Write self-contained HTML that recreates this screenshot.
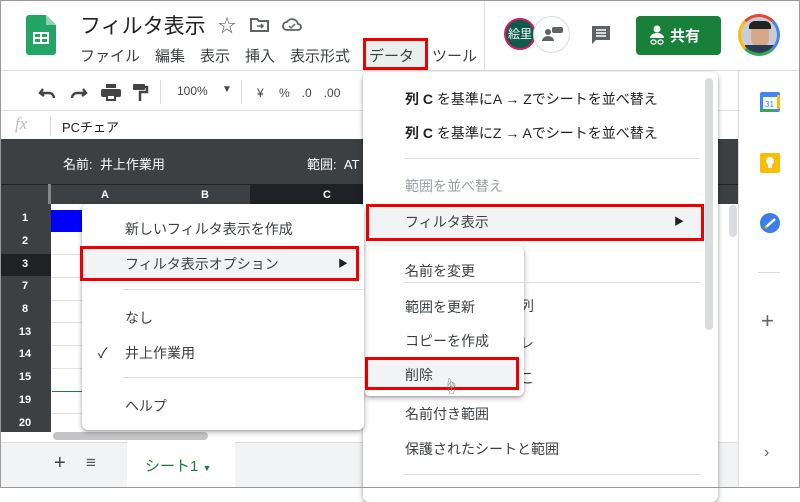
<!DOCTYPE html>
<html><head><meta charset="utf-8"><style>
*{margin:0;padding:0;box-sizing:border-box}
body{width:800px;height:488px;overflow:hidden;background:#fff;font-family:"Liberation Sans","Noto Sans CJK JP",sans-serif;color:#3c4043;position:relative}
.a{position:absolute}
.t{position:absolute;white-space:nowrap;font-size:14px;color:#3c4043}
.menu{position:absolute;background:#fff;border-radius:6px;box-shadow:0 2px 6px rgba(0,0,0,.3),0 1px 2px rgba(0,0,0,.15)}
.red{position:absolute;border:3px solid #e00;background:#f1f3f4}
.sep{position:absolute;height:1px;background:#dadce0}
.rn{position:absolute;left:0;width:50px;text-align:center;color:#fff;font-size:11px;font-weight:bold}
.hl{position:absolute;left:52px;width:310px;height:1px;background:#e2e2e2}
</style></head><body>
<div class="a" style="left:0;top:0;width:800px;height:488px;border:1px solid #999;z-index:50;pointer-events:none"></div>
<svg class="a" style="left:26px;top:15px" width="30" height="40" viewBox="0 0 30 40"><path d="M3 0h17l10 10v27a3 3 0 0 1-3 3H3a3 3 0 0 1-3-3V3a3 3 0 0 1 3-3z" fill="#23a566"/><path d="M20 0v10h10z" fill="#8ed1b1"/><rect x="7" y="17" width="16" height="12" fill="#fff"/><rect x="9" y="19" width="5" height="3" fill="#23a566"/><rect x="16" y="19" width="5" height="3" fill="#23a566"/><rect x="9" y="24" width="5" height="3" fill="#23a566"/><rect x="16" y="24" width="5" height="3" fill="#23a566"/></svg>
<div class="t" style="left:80px;top:10px;font-size:21px;color:#202124">フィルタ表示</div>
<div class="t" style="left:218px;top:12px;font-size:18px;color:#5f6368">☆</div>
<svg class="a" style="left:250px;top:17px" width="20" height="16"><path d="M1 2h6l2 2h9v10H1z" fill="none" stroke="#5f6368" stroke-width="2"/><path d="M7 9h6M11 7l2 2-2 2" stroke="#5f6368" stroke-width="1.6" fill="none"/></svg>
<svg class="a" style="left:282px;top:16px" width="20" height="16"><path d="M5 14a4 4 0 0 1 0-8 6 6 0 0 1 11 2 3 3 0 0 1 0 6z" fill="none" stroke="#5f6368" stroke-width="1.8"/><path d="M7 10l2 2 4-4" stroke="#5f6368" stroke-width="1.5" fill="none"/></svg>
<div class="t" style="left:80px;top:45px;font-size:15px">ファイル　編集　表示　挿入　表示形式</div>
<div class="a" style="left:363px;top:38px;width:65px;height:32px;border:3px solid #e00;background:#e8f0ee"></div>
<div class="t" style="left:369px;top:45px;font-size:15px">データ</div>
<div class="t" style="left:432px;top:45px;font-size:15px">ツール</div>
<div class="a" style="left:484px;top:0;width:1px;height:70px;background:#e0e0e0"></div>
<div class="a" style="left:504px;top:18px;width:32px;height:32px;border-radius:50%;background:#0d5b4b;border:2px solid #d81b60;color:#fff;font-size:12px;line-height:28px;text-align:center;overflow:hidden">絵里</div>
<div class="a" style="left:533px;top:16px;width:37px;height:37px;border-radius:50%;background:#fff;border:1.5px solid #dadce0"></div>
<svg class="a" style="left:542px;top:25px" width="22" height="18"><circle cx="6" cy="7" r="3" fill="#5f6368"/><path d="M0 16a6 5 0 0 1 12 0z" fill="#5f6368"/><rect x="10" y="2" width="11" height="6" rx="2" fill="#5f6368"/></svg>
<svg class="a" style="left:590px;top:24px" width="22" height="22"><path d="M2 2h18v14H6l-4 4z" fill="#5f6368"/><path d="M6 6h10M6 9h10M6 12h10" stroke="#fff" stroke-width="1.5"/></svg>
<div class="a" style="left:636px;top:16px;width:85px;height:39px;background:#188038;border-radius:4px"></div>
<svg class="a" style="left:648px;top:24px" width="18" height="22"><circle cx="9" cy="5" r="3.5" fill="#fff"/><path d="M2 14a7 5 0 0 1 14 0z" fill="#fff"/><rect x="3" y="16" width="5" height="4" rx="2" fill="none" stroke="#fff" stroke-width="1.3"/><rect x="10" y="16" width="5" height="4" rx="2" fill="none" stroke="#fff" stroke-width="1.3"/></svg>
<div class="t" style="left:670px;top:25px;font-size:15px;color:#fff;font-weight:bold">共有</div>
<div class="a" style="left:738px;top:14px;width:42px;height:42px;border-radius:50%;border:3px solid;border-color:#ea4335 #4285f4 #34a853 #fbbc04;background:#c9cdd3;overflow:hidden"><div class="a" style="left:10px;top:6px;width:18px;height:24px;border-radius:8px;background:#d6a88a"></div><div class="a" style="left:8px;top:4px;width:22px;height:8px;background:#222;border-radius:6px 6px 0 0"></div><div class="a" style="left:4px;top:28px;width:30px;height:12px;background:#2b3a55"></div></div>
<div class="a" style="left:0;top:70px;width:800px;height:1px;background:#dadce0"></div>
<svg class="a" style="left:38px;top:85px" width="50" height="16"><path d="M5 4L2 8l4 3M2 8h9a5 5 0 0 1 5 5" stroke="#444" stroke-width="2.4" fill="none"/><path d="M45 4l3 4-4 3M48 8h-9a5 5 0 0 0-5 5" stroke="#444" stroke-width="2.4" fill="none"/></svg>
<svg class="a" style="left:101px;top:84px" width="20" height="17"><rect x="5" y="0" width="10" height="4" fill="#444"/><rect x="0" y="5" width="20" height="8" rx="2" fill="#444"/><rect x="5" y="11" width="10" height="6" fill="#444"/><rect x="7" y="12" width="6" height="3" fill="#fff"/></svg>
<svg class="a" style="left:133px;top:84px" width="16" height="18"><rect x="0" y="0" width="12" height="6" rx="1" fill="#444"/><path d="M12 3h2v5H7v9" stroke="#444" stroke-width="2.5" fill="none"/></svg>
<div class="a" style="left:160px;top:80px;width:1px;height:24px;background:#dadce0"></div>
<div class="t" style="left:177px;top:84px;font-size:12px;color:#444">100%</div>
<div class="t" style="left:222px;top:84px;font-size:10px;color:#444">▼</div>
<div class="a" style="left:241px;top:80px;width:1px;height:24px;background:#dadce0"></div>
<div class="t" style="left:257px;top:84px;font-size:12px;color:#444">¥　 %　.0　.00</div>
<div class="a" style="left:0;top:110px;width:740px;height:1px;background:#e0e0e0"></div>
<div class="t" style="left:15px;top:114px;font-size:17px;color:#bbb;font-style:italic;font-family:'Liberation Serif',serif">fx</div>
<div class="a" style="left:50px;top:116px;width:1px;height:20px;background:#dadce0"></div>
<div class="t" style="left:62px;top:117px;font-size:13px;color:#202124">PCチェア</div>
<div class="a" style="left:0;top:139px;width:738px;height:45px;background:#3c4043"></div>
<div class="t" style="left:63px;top:154px;font-size:13px;color:#fff">名前:&nbsp; 井上作業用</div>
<div class="t" style="left:307px;top:154px;font-size:13px;color:#fff">範囲:&nbsp; AT</div>
<div class="a" style="left:0;top:184px;width:738px;height:20px;background:#3c4043;border-top:1px solid #222"></div>
<div class="a" style="left:48px;top:184px;width:3px;height:20px;background:#888"></div>
<div class="a" style="left:250px;top:184px;width:120px;height:20px;background:#202124"></div>
<div class="t" style="left:101px;top:189px;font-size:11px;color:#fff;font-weight:bold">A</div>
<div class="t" style="left:201px;top:189px;font-size:11px;color:#fff;font-weight:bold">B</div>
<div class="t" style="left:323px;top:189px;font-size:11px;color:#fff;font-weight:bold">C</div>
<div class="a" style="left:0;top:204px;width:51px;height:228px;background:#3c4043"></div>
<div class="a" style="left:0;top:254px;width:51px;height:22px;background:#202124"></div>
<div class="a" style="left:51px;top:210px;width:35px;height:22px;background:#0000ff"></div>
<div class="rn" style="top:212px">1</div><div class="rn" style="top:235px">2</div><div class="rn" style="top:258px">3</div><div class="rn" style="top:280px">7</div><div class="rn" style="top:303px">8</div><div class="rn" style="top:326px">13</div><div class="rn" style="top:348px">14</div><div class="rn" style="top:371px">15</div><div class="rn" style="top:394px">19</div><div class="rn" style="top:417px">20</div>
<div class="hl" style="top:254px"></div><div class="hl" style="top:277px"></div><div class="hl" style="top:300px"></div><div class="hl" style="top:322px"></div><div class="hl" style="top:345px"></div><div class="hl" style="top:368px"></div><div class="a" style="left:52px;top:391px;width:310px;height:1px;background:#188038"></div><div class="hl" style="top:413px"></div>
<div class="a" style="left:53px;top:432px;width:155px;height:8px;border-radius:4px;background:#c5c5c5"></div>
<div class="a" style="left:0;top:442px;width:738px;height:46px;background:#f1f3f4;border-top:1px solid #dadce0"></div>
<div class="t" style="left:54px;top:452px;font-size:20px;color:#444">+</div>
<div class="t" style="left:86px;top:453px;font-size:17px;color:#555">≡</div>
<div class="a" style="left:127px;top:442px;width:108px;height:46px;background:#fff"></div>
<div class="t" style="left:145px;top:455px;font-size:15px;color:#188038">シート1 <span style="font-size:9px">▼</span></div>
<div class="a" style="left:738px;top:71px;width:1px;height:417px;background:#dadce0"></div>
<svg class="a" style="left:759px;top:91px" width="22" height="22"><rect x="1" y="1" width="20" height="20" rx="2" fill="#4285f4"/><rect x="4" y="6" width="14" height="12" fill="#fff"/><rect x="1" y="18" width="14" height="3" fill="#34a853"/><rect x="18" y="4" width="3" height="14" fill="#fbbc04"/><text x="6" y="16" font-size="8" fill="#4285f4" font-family="Liberation Sans">31</text></svg>
<svg class="a" style="left:759px;top:152px" width="22" height="22"><rect x="1" y="1" width="20" height="20" rx="2" fill="#fbbc04"/><circle cx="11" cy="9" r="4" fill="#fff"/><rect x="9" y="13" width="4" height="3" fill="#fff"/></svg>
<svg class="a" style="left:759px;top:212px" width="22" height="22"><circle cx="11" cy="11" r="10" fill="#3b7de9"/><path d="M7 15l9-8" stroke="#fff" stroke-width="2.5"/><circle cx="7" cy="15" r="1.5" fill="#fbbc04"/></svg>
<div class="a" style="left:758px;top:272px;width:22px;height:1px;background:#dadce0"></div>
<div class="t" style="left:761px;top:308px;font-size:22px;color:#5f6368">+</div>
<div class="t" style="left:764px;top:444px;font-size:16px;color:#5f6368">›</div>
<div class="menu" style="left:363px;top:72px;width:355px;height:430px"></div>
<div class="a" style="left:705px;top:78px;width:8px;height:252px;border-radius:4px;background:#dadce0"></div>
<div class="a" style="left:729px;top:205px;width:8px;height:32px;border-radius:4px;background:#dadce0"></div>
<div class="t" style="left:405px;top:89px;color:#202124"><b>列 C</b> を基準にA → Zでシートを並べ替え</div>
<div class="t" style="left:405px;top:123px;color:#202124"><b>列 C</b> を基準にZ → Aでシートを並べ替え</div>
<div class="sep" style="left:404px;top:158px;width:296px"></div>
<div class="t" style="left:405px;top:176px;color:#9aa0a6">範囲を並べ替え</div>
<div class="red" style="left:366px;top:204px;width:338px;height:37px"></div>
<div class="t" style="left:405px;top:212px">フィルタ表示</div>
<div class="t" style="left:674px;top:213px;font-size:10px;color:#202124">▶</div>
<div class="t" style="left:520px;top:296px">列</div>
<div class="t" style="left:520px;top:333px">レ</div>
<div class="t" style="left:520px;top:368px">こ</div>
<div class="t" style="left:405px;top:404px">名前付き範囲</div>
<div class="t" style="left:405px;top:439px">保護されたシートと範囲</div>
<div class="sep" style="left:404px;top:474px;width:296px"></div>
<div class="menu" style="left:364px;top:246px;width:160px;height:150px"></div>
<div class="t" style="left:405px;top:261px">名前を変更</div>
<div class="sep" style="left:404px;top:282px;width:296px"></div>
<div class="t" style="left:405px;top:297px">範囲を更新</div>
<div class="t" style="left:405px;top:331px">コピーを作成</div>
<div class="red" style="left:365px;top:357px;width:154px;height:33px"></div>
<div class="t" style="left:405px;top:365px">削除</div>
<div class="t" style="left:443px;top:373px;font-size:16px;color:#777">☝</div>
<div class="menu" style="left:82px;top:204px;width:282px;height:226px"></div>
<div class="t" style="left:125px;top:219px">新しいフィルタ表示を作成</div>
<div class="red" style="left:80px;top:246px;width:279px;height:35px"></div>
<div class="t" style="left:125px;top:254px">フィルタ表示オプション</div>
<div class="t" style="left:338px;top:255px;font-size:10px;color:#202124">▶</div>
<div class="sep" style="left:123px;top:289px;width:240px"></div>
<div class="t" style="left:125px;top:308px">なし</div>
<div class="t" style="left:98px;top:343px;color:#202124">✓</div>
<div class="t" style="left:125px;top:343px">井上作業用</div>
<div class="sep" style="left:123px;top:377px;width:240px"></div>
<div class="t" style="left:125px;top:396px">ヘルプ</div>
</body></html>
